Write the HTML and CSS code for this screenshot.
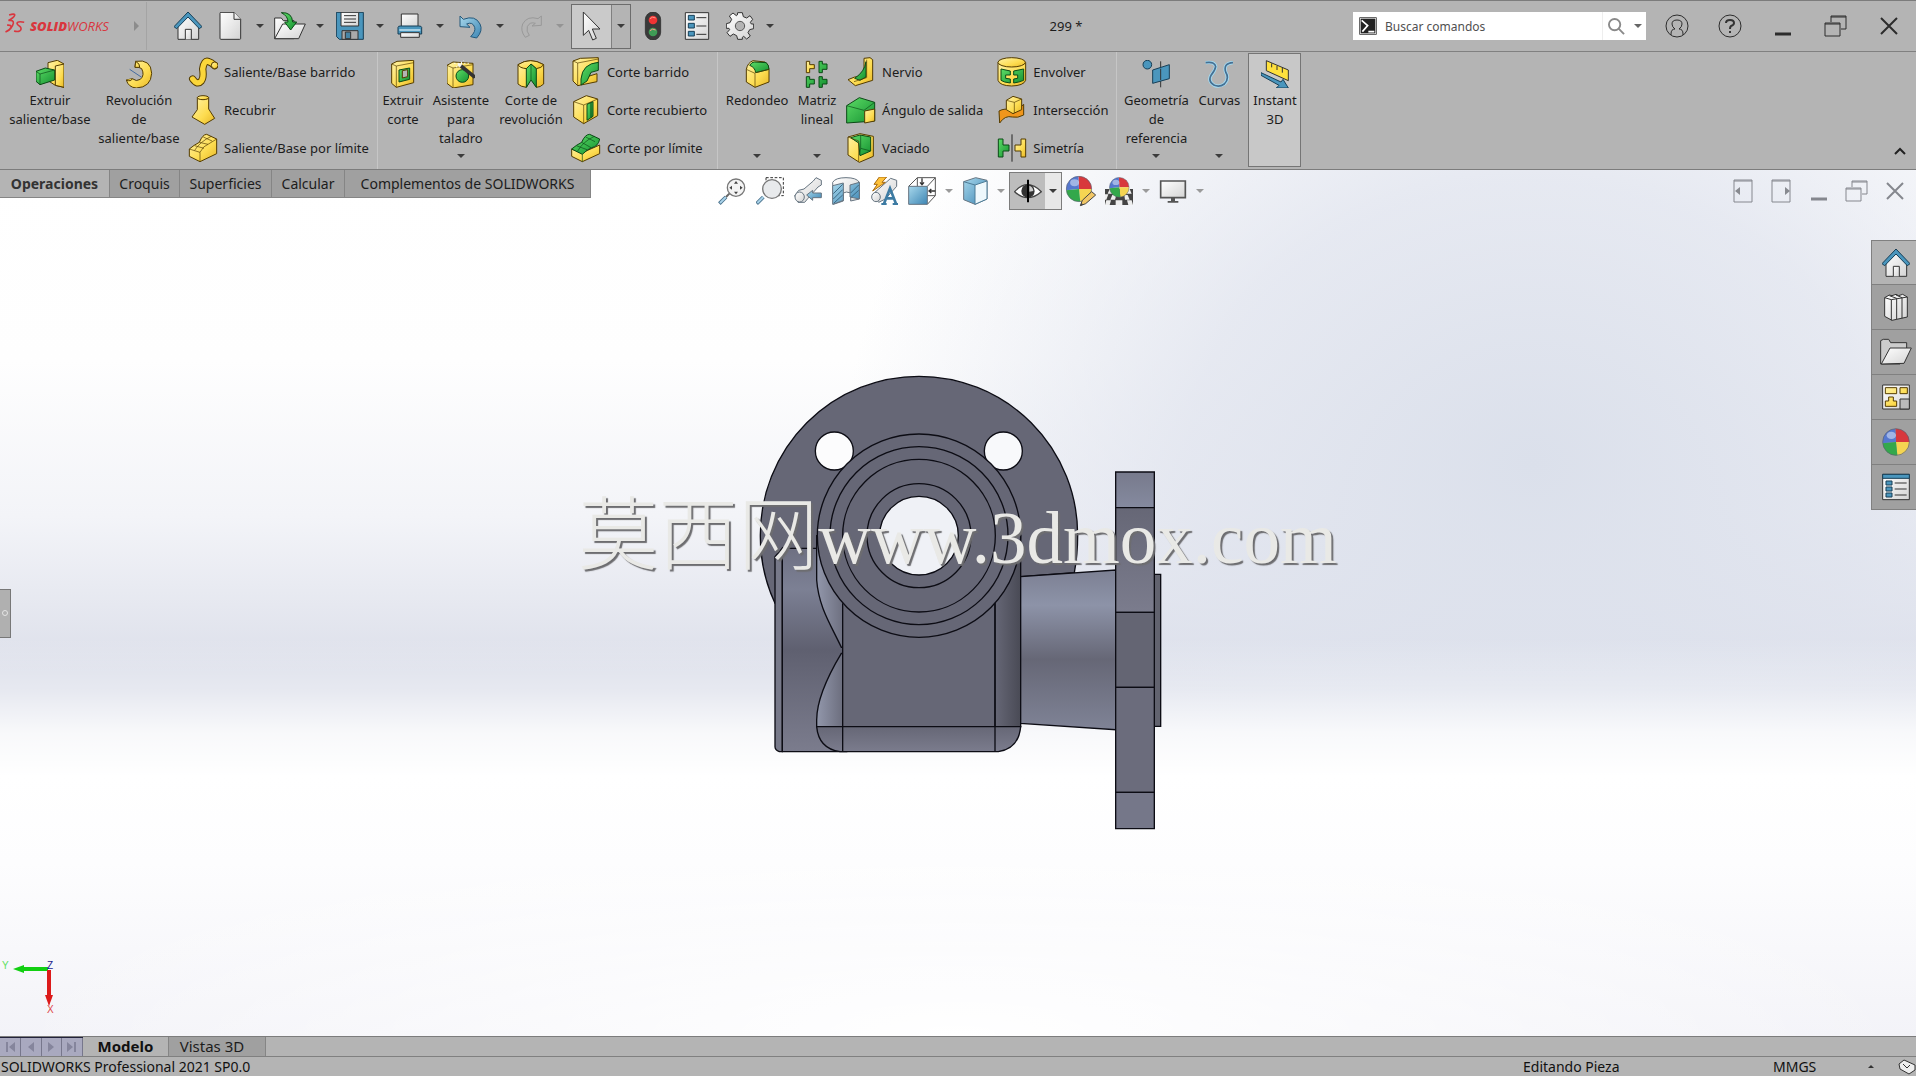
FILE: index.html
```html
<!DOCTYPE html>
<html lang="es">
<head>
<meta charset="utf-8">
<title>299 - SOLIDWORKS</title>
<link rel="stylesheet" href="styles.css">
</head>
<body>
<svg class="defs" aria-hidden="true">
  <defs>
    <linearGradient id="gy" x1="0" y1="0" x2="1" y2="1"><stop offset="0" stop-color="#fff3a8"/><stop offset=".6" stop-color="#fddc50"/><stop offset="1" stop-color="#e6b626"/></linearGradient>
    <linearGradient id="gg" x1="0" y1="0" x2="1" y2="1"><stop offset="0" stop-color="#5ddc66"/><stop offset="1" stop-color="#159232"/></linearGradient>
    <linearGradient id="gb" x1="0" y1="0" x2="1" y2="1"><stop offset="0" stop-color="#a8d8ec"/><stop offset="1" stop-color="#3d86b4"/></linearGradient>
    <linearGradient id="gw" x1="0" y1="0" x2="1" y2="1"><stop offset="0" stop-color="#ffffff"/><stop offset="1" stop-color="#d4d4d4"/></linearGradient>
    <symbol id="house" viewBox="0 0 84 84"><path class="w" d="M12 38V82H74V38L42 8Z"/><path class="w" d="M34 82V52H52V82"/><path class="bd" d="M0 44L42 0 84 44 76 50 42 15 8 50Z"/></symbol>
    <symbol id="ball" viewBox="0 0 84 84"><path fill="#d8383c" d="M42 42L40 2A40 40 0 0 1 82 42Z"/><path fill="#5578cf" d="M42 42L2 46A40 40 0 0 1 40 2Z"/><path fill="#f5d552" d="M42 42L82 42A40 40 0 0 1 46 82Z"/><path fill="#33a84b" d="M42 42L46 82A40 40 0 0 1 2 46Z"/><circle cx="42" cy="42" r="40" fill="none" stroke="#5a6070" stroke-width="2"/><ellipse cx="28" cy="22" rx="14" ry="11" fill="#fff" opacity=".45"/></symbol>
    <symbol id="restore" viewBox="0 0 24 24"><path class="thin" d="M7 8V2H22V15H17M1 9H16V22H1ZM1 10H16M7 3H22"/></symbol>
    <symbol id="close" viewBox="0 0 24 24"><path class="cross" d="M4 4L20 20M20 4L4 20"/></symbol>
    <symbol id="minus" viewBox="0 0 24 24"><path class="bar" d="M4 20H20"/></symbol>
  </defs>
</svg>

<header class="titlebar">
  <a class="brand" href="#" aria-label="SOLIDWORKS">
    <svg class="mark" viewBox="0 0 60 64"><path d="M12 6Q30 0 29 7 26 15 10 23 26 20 25 31 21 50 1 58M6 37Q20 36 18 44 14 53 1 58M58 28Q38 24 36 31 36 36 46 42 52 50 44 55 38 58 27 55"/></svg>
    <span class="word"><b>SOLID</b>WORKS</span>
    <span class="more"></span>
  </a>
  <nav class="quick" aria-label="Acceso rápido">
    <button class="q" aria-label="Inicio"><svg class="i28"><use href="#house"/></svg></button>
    <button class="q" aria-label="Nuevo"><svg class="i28" viewBox="0 0 84 84"><path class="w" d="M12 4Q12 1 15 1H54L74 22V79Q74 82 71 82H15Q12 82 12 79Z"/><path class="w" d="M54 1V22H74"/></svg></button>
    <button class="c" aria-label="Más opciones de Nuevo"><i class="caret"></i></button>
    <button class="q" aria-label="Abrir"><svg class="i32" viewBox="0 0 96 84"><path class="w" d="M2 80V18H22L28 26H60V80Z"/><path class="w" d="M2 80L26 36H94L74 80Z"/><path class="g" d="M22 2Q54 0 56 30H68L50 54 32 30H42Q42 12 22 2Z"/></svg></button>
    <button class="c" aria-label="Más opciones de Abrir"><i class="caret"></i></button>
    <button class="q" aria-label="Guardar"><svg class="i28" viewBox="0 0 84 84"><path class="bd" d="M1 1H82V82H10L1 73Z"/><path class="w" d="M15 1H68V42H15Z"/><path class="l" d="M24 11H60M24 21H60M24 31H60"/><path fill="#aaa" stroke="#333" stroke-width="3" d="M18 56H66V82H18Z"/><path fill="#4684a6" stroke="#333" stroke-width="3" d="M28 60H44V80H28Z"/></svg></button>
    <button class="c" aria-label="Más opciones de Guardar"><i class="caret"></i></button>
    <button class="q" aria-label="Imprimir"><svg class="i28" viewBox="0 0 84 84"><path class="w" d="M16 6H66V44H16Z"/><path class="bd" d="M6 46Q6 42 14 42H68Q77 42 77 46V66H6Z"/><path class="w" d="M14 62H70V76H14Z"/><path stroke="#d6eef8" stroke-width="4" d="M10 54H73"/></svg></button>
    <button class="c" aria-label="Más opciones de Imprimir"><i class="caret"></i></button>
    <button class="q" aria-label="Deshacer"><svg class="i28" viewBox="0 0 84 84"><path class="b" d="M12 12V44L42 46 32 36Q50 28 56 46 60 58 44 74L62 78Q82 56 72 36 58 8 22 22Z"/></svg></button>
    <button class="c" aria-label="Más opciones de Deshacer"><i class="caret"></i></button>
    <button class="q" aria-label="Rehacer" disabled><svg class="i28" viewBox="0 0 84 84"><path fill="none" stroke="#999" stroke-width="3" d="M76 12V40L48 42 58 34Q42 28 34 44 30 58 40 70L28 76Q12 56 20 36 34 10 66 20Z"/></svg></button>
    <button class="c dim" aria-label="Más opciones de Rehacer" disabled><i class="caret"></i></button>
    <span class="pick"><button class="sel" aria-label="Seleccionar"><svg class="i32" viewBox="0 0 96 96"><path class="w" d="M22 6V76L38 61 50 90 61 85 49 57H72Z"/></svg></button><button class="selc" aria-label="Más opciones de Seleccionar"><i class="caret"></i></button></span>
    <button class="q wide" aria-label="Reconstruir"><svg class="i28" viewBox="0 0 84 84"><rect x="19" y="0" width="46" height="84" rx="23" fill="#3a3a3a" stroke="#222" stroke-width="2"/><circle cx="42" cy="24" r="13" fill="#f03434"/><circle cx="42" cy="60" r="13" fill="#3f9b55"/><path stroke="#ff9a8a" stroke-width="3" d="M33 20Q40 12 50 18M33 56Q40 48 50 54" fill="none"/></svg></button>
    <button class="q wide" aria-label="Propiedades"><svg class="i28" viewBox="0 0 84 84"><path class="w" d="M7 2H77V82H7Z"/><path class="l" d="M40 17H70M40 42H70M40 67H70"/><path class="bd" d="M16 10H34V24H16ZM16 34H34V48H16ZM16 58H34V72H16Z"/></svg></button>
    <button class="q" aria-label="Opciones"><svg class="i28" viewBox="0 0 84 84"><path class="w" d="M35 2H49L52 14 62 18 72 11 80 22 73 31 76 36H83V50L71 53 66 62 73 72 62 81 53 73 49 76V82H35L32 71 22 66 12 73 3 62 11 53 9 49H1V35L12 32 17 22 10 12 21 3 31 11 34 9Z"/><circle cx="42" cy="42" r="14" fill="#b4b4b4" stroke="#555" stroke-width="3"/></svg></button>
    <button class="c" aria-label="Más opciones de configuración"><i class="caret"></i></button>
  </nav>
  <h1 class="doc">299 *</h1>
  <div class="search">
    <svg class="prompt" viewBox="0 0 54 54"><rect x="1" y="1" width="52" height="52" fill="#222"/><rect x="4" y="4" width="46" height="46" fill="none" stroke="#eee" stroke-width="2"/><path d="M8 10L26 26 10 44M28 44H46" fill="none" stroke="#fff" stroke-width="5"/></svg>
    <input type="text" placeholder="Buscar comandos" aria-label="Buscar comandos">
    <button class="lens" aria-label="Buscar"><svg viewBox="0 0 18 18"><circle cx="7" cy="7" r="6"/><path d="M11 11L17 17"/></svg></button>
    <button class="lensc" aria-label="Opciones de búsqueda"><i class="caret"></i></button>
  </div>
  <div class="window">
    <button aria-label="Iniciar sesión"><svg class="i24" viewBox="0 0 24 24"><path class="thin" d="M6 21V20Q6 15 10 15 7 13 7 10 7 6 12 6 17 6 17 10 17 13 14 15 18 15 18 20V21"/><circle class="thin" cx="12" cy="12" r="11"/></svg></button>
    <button aria-label="Ayuda"><svg class="i24" viewBox="0 0 24 24"><circle class="thin" cx="12" cy="12" r="11"/><path d="M8 9Q8 6 12 6 16 6 16 9 16 11 13 12 12 13 12 15M12 17V19" fill="none" stroke="#333" stroke-width="2"/></svg></button>
    <button aria-label="Minimizar"><svg class="i24"><use href="#minus"/></svg></button>
    <button aria-label="Restaurar"><svg class="i24"><use href="#restore"/></svg></button>
    <button aria-label="Cerrar"><svg class="i24"><use href="#close"/></svg></button>
  </div>
</header>

<section class="ribbon" aria-label="Operaciones">
  <div class="group">
    <button class="big w100"><svg class="i28" viewBox="0 0 84 84"><path class="y" d="M36 8L64 1 84 12V82L58 76 36 62Z"/><path class="y" d="M58 18L84 12V82L58 76Z"/><path class="g" d="M0 34L28 24 56 30V60L12 74 0 64Z"/><path class="gl" d="M0 34L12 42 56 30M12 42V74"/></svg><span>Extruir<br>saliente/base</span></button>
    <button class="big w78"><svg class="i28" viewBox="0 0 84 84"><path class="y" d="M32 4Q78-4 80 40 78 82 34 84 10 82 4 60L22 56Q34 66 46 58 60 46 50 26 42 20 30 22Z"/><path class="y" d="M32 4Q46 12 44 22 36 22 30 22ZM4 60Q18 66 22 56"/><path stroke="#456ca0" stroke-width="3" d="M14 28L50 52"/></svg><span>Revolución<br>de<br>saliente/base</span></button>
    <div class="stack s1">
      <button class="row"><svg class="i30" viewBox="0 0 90 90"><path fill="none" stroke="#543c00" stroke-width="22" stroke-linecap="round" d="M14 66Q28 86 40 72 48 62 44 36 48 8 62 14 70 16 80 26"/><path fill="none" stroke="#fbd63a" stroke-width="16" stroke-linecap="round" d="M14 66Q28 86 40 72 48 62 44 36 48 8 62 14 70 16 80 26"/><circle class="y" cx="80" cy="25" r="10"/></svg>Saliente/Base barrido</button>
      <button class="row"><svg class="i30" viewBox="0 0 90 90"><path class="y" d="M28 8V44L12 66 50 88 80 70 62 42V8Z"/><ellipse class="y" cx="45" cy="8" rx="17" ry="6"/></svg>Recubrir</button>
      <button class="row"><svg class="i30" viewBox="0 0 90 90"><path class="y" d="M4 48Q18 36 34 28 44 4 56 4L86 18V62L36 86 4 70Z"/><path class="yl" d="M4 48L36 58Q46 38 60 34L86 18M36 58V86M20 38L48 46M34 28L60 34M46 12L72 24M20 52Q36 26 70 10"/></svg>Saliente/Base por límite</button>
    </div>
  </div>
  <div class="group">
    <button class="big w50"><svg class="i28" viewBox="0 0 84 84"><path class="y" d="M8 12L24 4 74 1V68L22 82 8 70Z"/><path class="yl" d="M8 12L22 18 74 8M22 18V82"/><path class="g" d="M30 30L62 24V58L30 66Z"/><path fill="#b4b4b4" stroke="#543c00" stroke-width="3" d="M40 32L56 29V50L40 54Z"/></svg><span>Extruir<br>corte</span></button>
    <button class="big w66"><svg class="i28" viewBox="0 0 84 84"><path class="y" d="M0 16L18 6 78 10V74L18 84 0 70Z"/><path class="yl" d="M0 16L18 24V84M18 24L78 14"/><circle class="g" cx="46" cy="48" r="19"/><path stroke="#eee" stroke-width="10" d="M34 12L44 20"/><path stroke="#333" stroke-width="11" d="M42 18L84 52"/><path stroke="#fff" stroke-width="4" stroke-dasharray="3 7" d="M22 10H66M28 22L50 0"/></svg><span>Asistente<br>para<br>taladro</span><i class="caret"></i></button>
    <button class="big w74"><svg class="i28" viewBox="0 0 84 84"><path class="y" d="M3 14Q40-10 80 14V72Q70 82 58 82L42 56 28 82Q10 80 3 72Z"/><path class="y" d="M3 14Q40-10 80 14 74 24 58 26L42 12 28 26Q8 24 3 14Z"/><path class="g" d="M42 12L58 26V82L42 60 28 82V26Z"/><path class="gl" d="M42 12V60"/></svg><span>Corte de<br>revolución</span></button>
    <div class="stack s2">
      <button class="row"><svg class="i30" viewBox="0 0 90 90"><path class="y" d="M6 12L28 4 82 2V18Q60 30 52 58L78 50V74L20 86 6 72Z"/><path class="g" d="M30 66Q34 20 82 16V40L60 46 48 72 30 84Z"/><path class="yl" d="M6 12L20 18 82 6M20 18V86"/></svg>Corte barrido</button>
      <button class="row"><svg class="i30" viewBox="0 0 90 90"><path class="y" d="M8 20L46 2 80 12V62L38 86 8 66Z"/><path class="yl" d="M8 20L38 30 80 12M38 30V86"/><path class="g" d="M48 28L66 20V64L48 76Z"/><path class="g" d="M60 22V68"/></svg>Corte recubierto</button>
      <button class="row"><svg class="i30" viewBox="0 0 90 90"><path class="y" d="M2 48L32 60 86 36V62L34 86 2 70Z"/><path class="g" d="M2 48Q16 36 32 28 42 4 56 4L86 18Q82 40 62 44 50 48 34 64Z"/><path class="gl" d="M16 38L48 50M32 28L60 44M44 12L72 26M20 54Q36 26 70 10M34 64V86"/></svg>Corte por límite</button>
    </div>
  </div>
  <div class="group">
    <button class="big w78"><svg class="i28" viewBox="0 0 84 84"><path class="y" d="M10 28Q14 8 30 2L66 6Q78 12 78 30V66L36 82 10 66Z"/><path class="g" d="M20 16Q26 6 34 6L70 8Q78 16 78 28L38 38Q36 22 20 16Z"/><path class="yl" d="M10 28L36 40V82M38 38L78 28"/></svg><span>Redondeo</span><i class="caret"></i></button>
    <button class="big w42"><svg class="i28" viewBox="0 0 84 84"><path class="y" d="M10 4H20V14H34V26H20V38H10Z"/><path class="g" d="M48 4H58V12H72V28H58V38H48ZM10 50H20V58H34V72H20V82H10ZM48 50H58V58H72V72H58V82H48Z"/></svg><span>Matriz<br>lineal</span><i class="caret"></i></button>
    <div class="stack s3">
      <button class="row"><svg class="i30" viewBox="0 0 90 90"><path class="y" d="M54 4L72 2 80 8V70L28 86 6 68 26 60 54 56Z"/><path class="g" d="M60 14Q56 44 26 64L42 70 60 60Z"/><path class="yl" d="M62 8V62L24 74"/></svg>Nervio</button>
      <button class="row"><svg class="i30" viewBox="0 0 90 90"><path class="g" d="M2 32L40 8 86 22V78L2 84Z"/><path class="gl" d="M2 32L54 46 86 22"/><path class="y" d="M56 48L86 42V78L56 84Z"/></svg>Ángulo de salida</button>
      <button class="row"><svg class="i30" viewBox="0 0 90 90"><path class="y" d="M6 12L42 2 82 10V70L40 88 6 66Z"/><path class="g" d="M14 14L42 6 74 12V54L42 68 38 30Z"/><path class="yl" d="M6 12L38 24V86"/><path class="gl" d="M44 6V46L74 54M44 46L40 66"/></svg>Vaciado</button>
    </div>
    <div class="stack s4">
      <button class="row"><svg class="i30" viewBox="0 0 90 90"><path class="y" d="M3 16V70Q8 86 44 87 80 86 86 70V16Z"/><ellipse class="y" cx="44" cy="16" rx="41" ry="14"/><path class="g" d="M12 36L40 42V54H26V64L40 66V78Q20 76 12 70ZM50 42L80 36V70Q66 76 50 78V66L62 64V54H50Z"/></svg>Envolver</button>
      <button class="row"><svg class="i30" viewBox="0 0 90 90"><path fill="#f0961c" stroke="#543c00" stroke-width="3" d="M6 48Q24 38 42 46 58 50 80 28V60Q62 70 46 66 24 60 8 84Z"/><path class="y" d="M28 16L48 4 74 12V44L48 56 28 44Z"/><path class="yl" d="M28 16L52 22 74 12M52 22V54"/></svg>Intersección</button>
      <button class="row"><svg class="i30" viewBox="0 0 90 90"><path class="g" d="M4 18H18V36H36V54H18V72H4Z"/><path class="y" d="M86 18H72V36H54V54H72V72H86Z"/><path d="M45 4V86" stroke="#222" stroke-width="3"/></svg>Simetría</button>
    </div>
  </div>
  <div class="group last">
    <button class="big w78"><svg class="i28" viewBox="0 0 84 84"><path stroke="#333" stroke-width="3" d="M56 4V82"/><circle class="bd" cx="16" cy="14" r="13"/><path class="bd" d="M32 30L82 14V56L32 70Z"/><path stroke="#333" stroke-width="3" d="M56 26V60"/></svg><span>Geometría<br>de<br>referencia</span><i class="caret"></i></button>
    <button class="big w48"><svg class="i28" viewBox="0 0 84 84"><path fill="none" stroke="#a3dcf4" stroke-width="10" d="M2 8Q30 4 32 20 30 32 18 46 8 64 28 76 44 82 58 72 74 56 62 36 54 10 84 8"/><path fill="none" stroke="#456f92" stroke-width="5" d="M2 8Q30 4 32 20 30 32 18 46 8 64 28 76 44 82 58 72 74 56 62 36 54 10 84 8"/></svg><span>Curvas</span><i class="caret"></i></button>
    <button class="big on"><svg class="i28" viewBox="0 0 84 84"><path fill="#ffe13d" stroke="#333" stroke-width="3" d="M16 2L82 30V62L16 32Z"/><path stroke="#333" stroke-width="3" d="M32 10V22M48 18V30M64 24V38"/><path class="bd" d="M0 38L60 66 66 58 82 84H46L54 76 0 46Z"/></svg><span>Instant<br>3D</span></button>
  </div>
  <button class="fold" aria-label="Contraer"><svg viewBox="0 0 12 8"><path d="M1 7L6 2 11 7"/></svg></button>
</section>

<main class="viewport">
  <div class="head">
    <nav class="tabs" aria-label="Pestañas">
      <button class="tab active w110">Operaciones</button><button class="tab w70">Croquis</button><button class="tab w92">Superficies</button><button class="tab w73">Calcular</button><button class="tab w246">Complementos de SOLIDWORKS</button>
    </nav>
    <div class="hud">
      <button aria-label="Zoom para ajustar"><svg class="i28" viewBox="0 0 84 84"><path fill="none" stroke="#49718c" stroke-width="11" d="M4 80L24 60"/><path stroke="#a9d3ea" stroke-width="6" d="M6 78L24 60"/><path stroke="#666" stroke-width="6" d="M24 60L34 50"/><circle cx="54" cy="32" r="26" fill="#f4f4f4" stroke="#777" stroke-width="4"/><path fill="#444" d="M54 12L60 20H48ZM54 52L60 44H48ZM34 32L42 26V38ZM74 32L66 26V38Z"/></svg></button>
      <button aria-label="Zoom encuadre"><svg class="i28" viewBox="0 0 84 84"><path fill="none" stroke="#333" stroke-width="3" stroke-dasharray="8 5" d="M30 2H82V56H60M30 2V20"/><path stroke="#49718c" stroke-width="11" d="M2 80L22 60"/><path stroke="#a9d3ea" stroke-width="6" d="M4 78L22 60"/><circle cx="48" cy="36" r="28" fill="#e8eaec" stroke="#777" stroke-width="4"/></svg></button>
      <button aria-label="Vista previa"><svg class="i28" viewBox="0 0 84 84"><path class="w soft" d="M2 56L14 40 30 36 58 12 66 2 82 10V24L72 30 42 64 32 76 12 76Z"/><ellipse class="w soft" cx="17" cy="60" rx="14" ry="15"/><path class="b soft" d="M38 54L56 40V48H82V62H56V70Z"/></svg></button>
      <button aria-label="Vista de sección"><svg class="i28" viewBox="0 0 84 84"><path class="w soft" d="M2 16Q10 2 42 2 74 2 82 16V66L56 72V48Q42 42 34 48V72L4 82Z"/><path class="b soft" d="M2 26L34 18V70L2 82ZM54 24L82 16V66L54 60Z"/><path stroke="#3b6984" stroke-width="3" d="M4 50L32 22M4 66L32 38M6 78L32 54M56 48L80 24M58 60L80 40"/></svg></button>
      <button aria-label="Vistas de anotación"><svg class="i28" viewBox="0 0 84 84"><path class="w soft" d="M6 54L26 36 62 4 80 10V28L46 66 26 76Z"/><ellipse class="w soft" cx="18" cy="60" rx="13" ry="14"/><path fill="#ffc23a" stroke="#a86a10" stroke-width="3" d="M28 0H50L36 16H46L8 42 22 22H12Z"/><path fill="none" stroke="#3d7ba3" stroke-width="8" d="M42 80L60 34 78 80M48 64H72M34 82H50M68 82H86"/></svg></button>
      <button aria-label="Orientación de vista"><svg class="i28" viewBox="0 0 84 84"><path fill="#fff" stroke="#555" stroke-width="3" d="M2 28L28 2H82V56L58 82M28 2V28M58 56H82M58 28L82 2"/><path class="b soft" d="M2 28H58V82H2Z"/><path stroke="#333" stroke-width="4" fill="none" d="M42 4V22M36 16L42 23 48 16M82 42H64M70 36L63 42 70 48"/></svg></button>
      <button class="hc" aria-label="Más vistas"><i class="caret"></i></button>
      <button class="h36" aria-label="Estilo de visualización"><svg class="i28" viewBox="0 0 84 84"><path class="b soft" d="M8 14L44 2 78 10V66L42 82 8 68Z"/><path fill="#eef8fc" stroke="#4d7d98" stroke-width="3" d="M42 24L78 12V66L42 82Z"/><path fill="none" stroke="#4d7d98" stroke-width="3" d="M8 14L42 24"/></svg></button>
      <button class="hc" aria-label="Más estilos"><i class="caret"></i></button>
      <span class="eye"><button class="eyeb" aria-label="Ocultar o mostrar elementos"><svg class="i28" viewBox="0 0 84 84"><path fill="#fff" stroke="#444" stroke-width="4" d="M2 44Q40 2 82 44 40 80 2 44Z"/><circle cx="42" cy="42" r="20" fill="#333"/><path stroke="#000" stroke-width="6" d="M42 8V76"/><path fill="#ccc" d="M46 26A18 18 0 0 1 58 42L46 44Z"/></svg></button><button class="eyec" aria-label="Más elementos"><i class="caret"></i></button></span>
      <button aria-label="Editar apariencia"><svg class="i32" viewBox="0 0 96 96"><use href="#ball" x="2" y="2" width="80" height="80"/><path fill="#f2c766" stroke="#444" stroke-width="3" d="M80 50L92 60 62 86 46 92 52 76Z"/><path fill="#444" d="M46 92L49 83 55 89Z"/></svg></button>
      <button aria-label="Aplicar escena"><svg class="i28" viewBox="0 0 84 84"><path fill="#444" d="M0 36H84V84H0Z"/><path fill="#eee" d="M14 36H28L24 50H8ZM60 36H74L80 50H62ZM0 52H10L4 68H0ZM22 54H34L30 68H16ZM58 54H68L74 68H60ZM4 70H18L14 84H0ZM32 70H52V84H32ZM66 70H80L84 84H70Z"/><use href="#ball" x="12" y="0" width="62" height="62"/></svg></button>
      <button class="hc" aria-label="Más escenas"><i class="caret"></i></button>
      <button aria-label="Configuración de visualización"><svg class="i28" viewBox="0 0 84 84"><path fill="url(#gw)" stroke="#555" stroke-width="5" d="M5 12H79V62H5Z"/><path fill="#555" d="M36 62H48V72H58V77H26V72H36Z"/></svg></button>
      <button class="hc" aria-label="Más configuración"><i class="caret"></i></button>
    </div>
    <div class="docwin">
      <button aria-label="Panel izquierdo"><svg class="i24" viewBox="0 0 24 24"><path class="thin" d="M3 1H21V23H3ZM3 2H21"/><path fill="#888a90" d="M9 8V16L4 12Z"/></svg></button>
      <button aria-label="Panel derecho"><svg class="i24" viewBox="0 0 24 24"><path class="thin" d="M3 1H21V23H3ZM3 2H21"/><path fill="#888a90" d="M16 8V16L21 12Z"/></svg></button>
      <button aria-label="Minimizar documento"><svg class="i24"><use href="#minus"/></svg></button>
      <button aria-label="Restaurar documento"><svg class="i24"><use href="#restore"/></svg></button>
      <button aria-label="Cerrar documento"><svg class="i24"><use href="#close"/></svg></button>
    </div>
  </div>

  <div class="stage">
    <button class="handle" aria-label="Mostrar gestor"><i></i></button>
    <figure class="part">
      <svg class="solid" viewBox="0 0 1320 1440" role="img" aria-label="Pieza">
        <defs>
          <linearGradient id="boss" x1="0" y1="0" x2="0" y2="1"><stop offset="0" stop-color="#6e7082"/><stop offset=".2" stop-color="#7c8094"/><stop offset=".5" stop-color="#5f6070"/><stop offset="1" stop-color="#7b7c8d"/></linearGradient>
          <linearGradient id="cone" x1="0" y1="0" x2="0" y2="1"><stop offset="0" stop-color="#7c8093"/><stop offset=".22" stop-color="#8d93a8"/><stop offset=".56" stop-color="#666776"/><stop offset="1" stop-color="#7f8396"/></linearGradient>
          <linearGradient id="filr" x1="0" y1="0" x2="1" y2="0"><stop offset="0" stop-color="#666776"/><stop offset="1" stop-color="#494a55"/></linearGradient>
          <linearGradient id="fill" x1="0" y1="0" x2="1" y2="0"><stop offset="0" stop-color="#9297ab"/><stop offset="1" stop-color="#6c6e7e"/></linearGradient>
          <linearGradient id="foot" x1="0" y1="0" x2="0" y2="1"><stop offset="0" stop-color="#666776"/><stop offset="1" stop-color="#7b7c8d"/></linearGradient>
          <linearGradient id="shine" x1="0" y1="0" x2="0" y2="1"><stop offset="0" stop-color="#777a8c"/><stop offset="1" stop-color="#858a9f"/></linearGradient>
        </defs>
        <g stroke="#0c0c14" stroke-width="4">
          <path fill="#666776" d="M105 730A476 476 0 0 1 61 525A476 476 0 0 1 537 49A476 476 0 0 1 1013 525Q1013 584 1003 638L842 650V730Z"/>
          <circle cx="283" cy="273" r="57" fill="#fcfcfd"/><circle cx="790" cy="273" r="57" fill="#f8f9fb"/>
          <path fill="#777989" d="M105 590L127 565V1175H118Q105 1170 105 1160Z"/>
          <path fill="url(#boss)" d="M127 565H320V1175H127Z"/>
          <path fill="url(#fill)" d="M230 527V660C236 740 270 790 304 862H312V527Z"/>
          <path fill="url(#fill)" d="M304 880C250 970 230 1030 230 1080V1100H308V880Z"/>
          <path fill="#666776" stroke="none" d="M308 560H765V1100H308Z"/>
          <path fill="url(#filr)" d="M765 527H842V1100H765Z"/>
          <path fill="url(#foot)" d="M230 1100H842Q836 1166 775 1175H300Q236 1166 230 1100Z"/>
          <path fill="none" d="M308 730V1175M765 730V1175"/>
          <circle cx="537" cy="527" r="305" fill="#666776"/>
          <circle cx="537" cy="527" r="267" fill="none"/><circle cx="537" cy="527" r="229" fill="none"/><circle cx="537" cy="527" r="156" fill="none"/>
          <circle cx="537" cy="527" r="118" fill="#eff1f6"/>
          <path fill="url(#cone)" d="M842 650L1127 630V1109L842 1090Z"/>
          <path fill="#62636f" d="M1243 643H1262V1099H1243Z"/>
          <path fill="url(#shine)" d="M1127 336H1243V443H1127Z"/>
          <path fill="url(#foot)" d="M1127 443H1243V757H1127Z"/>
          <path fill="#646573" d="M1127 757H1243V982H1127Z"/>
          <path fill="#6b6c7c" d="M1127 982H1243V1297H1127Z"/>
          <path fill="#757789" d="M1127 1297H1243V1406H1127Z"/>
        </g>
      </svg>
      <figcaption class="mark-text"><span class="han">莫西网</span>www.3dmox.com</figcaption>
    </figure>
    <nav class="pane" aria-label="Panel de tareas">
      <button class="first" aria-label="Recursos"><svg class="i28"><use href="#house"/></svg></button>
      <button aria-label="Biblioteca de diseño"><svg class="i28" viewBox="0 0 84 84"><path class="w" d="M8 14L22 6 30 8 42 4 50 8 62 4 76 12V72L30 82 8 70Z"/><path class="l" d="M8 14L28 20 76 12M28 20V82M44 16V78M60 14V76M22 8L44 16M42 6L60 14"/></svg></button>
      <button aria-label="Explorador de archivos"><svg class="i32" viewBox="0 0 96 84"><path fill="#ccc" stroke="#333" stroke-width="3" d="M2 78V8L10 4H26L32 14H80V40L60 78Z"/><path class="w" d="M4 78L30 30H94L72 76Z"/></svg></button>
      <button aria-label="Paleta de visualización"><svg class="i28" viewBox="0 0 84 84"><path class="w" d="M2 6H82V78H2Z"/><path class="y" d="M10 14H44V32H10ZM54 14H76V32H54ZM20 42H34V54H44V70H10V54H20Z"/><path fill="#bbb" stroke="#333" stroke-width="3" d="M54 48H82V78H54Z"/></svg></button>
      <button aria-label="Apariencias"><svg class="i28"><use href="#ball"/></svg></button>
      <button aria-label="Propiedades personalizadas"><svg class="i28" viewBox="0 0 84 84"><path class="w" d="M2 4H82V80H2Z"/><path class="bd" d="M2 4H82V16H2ZM12 24H30V36H12ZM12 42H30V54H12ZM12 60H30V72H12Z"/><path class="l" d="M38 30H74M38 48H74M38 66H74"/></svg></button>
    </nav>
  </div>

  <svg class="triad" viewBox="0 0 60 56" aria-label="Ejes">
    <path d="M48 8H22" stroke="#12cf12" stroke-width="4"/><path fill="#12cf12" d="M13 8L24 4V12Z"/>
    <path d="M49 9V36" stroke="#dc1a1a" stroke-width="4"/><path fill="#dc1a1a" d="M49 45L45 34H53Z"/>
    <text x="2" y="8" fill="#5fe05f">Y</text><text x="47" y="8" fill="#1c1c8c">Z</text><text x="47" y="52" fill="#e04848">X</text>
  </svg>
</main>

<nav class="sheets" aria-label="Hojas">
  <span class="steps">
    <button aria-label="Primera"><svg viewBox="0 0 14 14"><path d="M3 2H5V12H3ZM12 2V12L6 7Z"/></svg></button><button aria-label="Anterior"><svg viewBox="0 0 14 14"><path d="M10 2V12L4 7Z"/></svg></button><button aria-label="Siguiente"><svg viewBox="0 0 14 14"><path d="M4 2V12L10 7Z"/></svg></button><button aria-label="Última"><svg viewBox="0 0 14 14"><path d="M9 2H11V12H9ZM2 2V12L8 7Z"/></svg></button>
  </span>
  <button class="sheet current">Modelo</button><button class="sheet">Vistas 3D</button>
</nav>
<footer class="status">
  <span class="product">SOLIDWORKS Professional 2021 SP0.0</span>
  <span class="mode">Editando Pieza</span>
  <span class="units">MMGS</span>
  <button class="up" aria-label="Cambiar unidades"><i></i></button>
  <button class="tag" aria-label="Etiquetas"><svg viewBox="0 0 18 16"><path d="M1 5L6 1 17 6V11L11 15 2 10Z" fill="#eee" stroke="#333"/><path d="M5 5L9 9 12 6" fill="none" stroke="#333"/></svg></button>
</footer>
</body>
</html>
```
FILE: styles.css
```css
* { box-sizing: border-box; }
body {
  margin: 0;
  height: 100vh;
  display: flex;
  flex-direction: column;
  overflow: hidden;
  background: #b4b4b4;
  color: #1c1c1c;
  font: 13px/19px "Noto Sans", "Open Sans", sans-serif;
}
button {
  margin: 0;
  padding: 0;
  border: 0;
  background: none;
  color: inherit;
  font: inherit;
  display: flex;
  align-items: center;
  justify-content: center;
}
svg { display: block; flex: none; }
.defs { position: absolute; width: 0; height: 0; }

/* icon sizes and paints */
.i24 { width: 24px; height: 24px; }
.i28 { width: 28px; height: 28px; }
.i30 { width: 30px; height: 30px; }
.i32 { width: 32px; height: 32px; }
.y { fill: url(#gy); stroke: #543c00; stroke-width: 3; stroke-linejoin: round; }
.yl { fill: none; stroke: #543c00; stroke-width: 2; }
.g { fill: url(#gg); stroke: #0b4a16; stroke-width: 3; stroke-linejoin: round; }
.gl { fill: none; stroke: #0b4a16; stroke-width: 2; }
.b { fill: url(#gb); stroke: #24587a; stroke-width: 3; stroke-linejoin: round; }
.bd { fill: #4a96bd; stroke: #173f57; stroke-width: 3; stroke-linejoin: round; }
.w { fill: url(#gw); stroke: #333; stroke-width: 3; stroke-linejoin: round; }
.soft { stroke: #667480; }
.l { fill: none; stroke: #333; stroke-width: 3; }
.thin { fill: none; stroke: currentColor; stroke-width: 1; }
.cross { fill: none; stroke: currentColor; stroke-width: 2; }
.bar { stroke: currentColor; stroke-width: 3; }
.caret {
  border: 4px solid transparent;
  border-top-color: #3c3c3c;
  border-bottom-width: 0;
}

/* title bar */
.titlebar {
  display: flex;
  align-items: center;
  flex: none;
  height: 52px;
  border-top: 1px solid #7c7c7c;
  border-bottom: 1px solid #808080;
}
.brand {
  display: flex;
  align-items: center;
  width: 147px;
  height: 48px;
  padding-left: 5px;
  gap: 5px;
  border-right: 1px solid #a4a4a4;
  color: #d9363e;
  text-decoration: none;
}
.mark { width: 20px; height: 21px; margin-bottom: 6px; }
.mark path { fill: none; stroke: #d9363e; stroke-width: 5; }
.word { font: italic 13px/19px "Open Sans", sans-serif; width: 99px; }
.word b { font-weight: 800; }
.more { border: 5px solid transparent; border-left-color: #8c8c8c; border-right-width: 0; }
.quick { display: flex; align-items: center; height: 50px; margin-left: 20px; }
.q { width: 42px; height: 44px; }
.wide { width: 44px; }
.c { width: 18px; height: 44px; }
.dim .caret { border-top-color: #949494; }
.pick { display: flex; margin-left: 2px; border: 1px solid #6c6c6c; height: 45px; }
.sel { width: 39px; background: #cacaca; }
.selc { width: 19px; border-left: 1px solid #808080; }
.doc { flex: 1; margin: 0; text-align: center; font-size: 13px; font-weight: 400; }
.search {
  display: flex;
  align-items: center;
  width: 293px;
  height: 28px;
  padding-left: 6px;
  background: #fff;
}
.prompt { width: 18px; height: 18px; }
.search input {
  flex: 1;
  min-width: 0;
  border: 0;
  padding: 1px 8px 0;
  font: 12px/19px "Noto Sans", sans-serif;
  color: #444;
  background: none;
}
.search input::placeholder { color: #505050; opacity: 1; }
.lens { width: 28px; height: 28px; border-left: 1px solid #eee; }
.lens svg { width: 17px; height: 17px; fill: none; stroke: #8a8a8a; stroke-width: 2; }
.lensc { width: 16px; }
.lensc .caret { border-top-color: #666; }
.window { display: flex; margin: 0 1px 0 4px; color: #2c2c2c; }
.window button { width: 53px; height: 44px; }

/* ribbon */
.ribbon { display: flex; flex: none; height: 118px; border-bottom: 1px solid #7c7c7c; }
.group { display: flex; height: 117px; border-right: 1px solid #c6c6c6; }
.last { border-right: 0; }
.big {
  flex-direction: column;
  justify-content: flex-start;
  padding: 8px 0 11px;
  white-space: nowrap;
}
.big span { margin-top: 3px; }
.big .caret { margin-top: auto; }
.w42 { width: 42px; }
.w48 { width: 48px; }
.w50 { width: 50px; }
.w66 { width: 66px; }
.w74 { width: 74px; }
.w78 { width: 78px; }
.w100 { width: 100px; }
.on { width: 53px; height: 114px; margin: 1px 0 0 5px; padding-top: 6px; border: 1px solid #757575; background: #c8c8c8; }
.stack { display: flex; flex-direction: column; padding-top: 1px; }
.s1 { padding-left: 10px; padding-right: 8px; }
.s2 { padding-left: 3px; padding-right: 10px; }
.s3 { padding-left: 8px; padding-right: 12px; }
.s4 { padding-left: 2px; padding-right: 8px; }
.row { height: 38px; gap: 6px; justify-content: flex-start; white-space: nowrap; }
.fold { align-self: flex-end; margin: 0 10px 14px auto; }
.fold svg { width: 12px; height: 8px; fill: none; stroke: #222; stroke-width: 2; }

/* graphics area */
.viewport {
  flex: 1;
  min-height: 0;
  display: flex;
  flex-direction: column;
  position: relative;
  background:
    radial-gradient(ellipse 50% 26% at 50% 100%, #ffffff 0%, rgba(255, 255, 255, 0) 100%),
    linear-gradient(180deg, rgba(255, 255, 255, 0) 54%, rgba(255, 255, 255, .3) 60%, rgba(255, 255, 255, .8) 65%, #ffffff 70%, #fdfdfe 80%, #f3f3f8 100%),
    radial-gradient(ellipse 36% 66% at 80% 34%, #dbe0eb 0%, rgba(222, 226, 237, .75) 50%, rgba(232, 235, 243, 0) 100%),
    linear-gradient(180deg, #ffffff 0%, #fefefe 22%, #f3f4f8 40%, #dcdfea 58%, #dcdfea 100%);
}
.head { display: grid; grid-template-columns: 1fr auto 1fr; height: 40px; flex: none; }
.tabs { display: flex; align-items: flex-start; }
.tab {
  height: 28px;
  flex: none;
  background: #a0a0a0;
  border-right: 1px solid #858585;
  border-bottom: 1px solid #858585;
  font-size: 14px;
  white-space: nowrap;
}
.active { background: #b4b4b4; font-weight: 700; color: #333; }
.w110 { width: 110px; }
.w70 { width: 70px; }
.w92 { width: 92px; }
.w73 { width: 73px; }
.w246 { width: 246px; }
.hud { display: flex; align-items: center; height: 40px; padding: 2px 0 0 5px; }
.hud button { width: 38px; height: 38px; }
.hud .h36 { width: 36px; }
.hud .hc { width: 16px; }
.hc .caret { border-top-color: #9a9a9a; }
.eye { display: flex; border: 1px solid #7c7c7c; }
.hud .eyeb { width: 35px; height: 36px; background: #bdbdbd; }
.hud .eyec { width: 16px; height: 36px; background: #e8e8e8; }
.docwin { display: flex; justify-content: flex-end; align-items: center; padding: 2px 2px 0 0; color: #85878e; }
.docwin button { width: 38px; height: 38px; }
.stage { flex: 1; min-height: 0; display: flex; align-items: center; justify-content: space-between; }
.handle { width: 11px; height: 49px; margin: 0 37px 20px 0; background: #b0b0b0; border: 1px solid #777; border-left: 0; }
.handle i { width: 6px; height: 6px; border: 1px solid #e4e4e4; border-radius: 3px; }
.part { position: relative; margin: 0 0 46px; }
.solid { width: 440px; height: 480px; }
.mark-text {
  position: absolute;
  left: 50%;
  top: 173px;
  transform: translate(-50%, -50%);
  padding-right: 4px;
  white-space: nowrap;
  font: 73px/80px "Liberation Serif", serif;
  color: #e9e9e6;
  text-shadow: 2px 2px 1px #6d6d70;
}
.han { font: 300 80px/80px "Noto Sans CJK SC", sans-serif; }
.pane { align-self: flex-start; margin-top: 30px; width: 45px; border-left: 1px solid #808080; }
.pane button { width: 44px; height: 45px; padding-left: 4px; background: #a0a0a0; border-bottom: 1px solid #808080; }
.pane .first { background: #b4b4b4; border-top: 1px solid #808080; }
.triad { position: absolute; left: 0; bottom: 19px; width: 60px; height: 56px; }
.triad text { font: 10px "Liberation Sans", sans-serif; }

/* sheet tabs and status bar */
.sheets { display: flex; flex: none; height: 20px; border-top: 1px solid #7c7c7c; }
.steps { display: flex; width: 83px; border-top: 1px solid #22223a; background: #a9a9bf; }
.steps button { flex: 1; border-right: 1px solid #77778c; }
.steps svg { width: 14px; height: 14px; fill: #85859c; }
.sheet { width: 97px; padding-right: 10px; background: #a0a0a0; border-right: 1px solid #858585; font-size: 15px; }
.sheet.current { width: 86px; padding: 0; background: #b4b4b4; font-weight: 700; color: #111; }
.status {
  display: flex;
  flex: none;
  height: 20px;
  padding-left: 1px;
  border-top: 1px solid #808080;
  font-size: 14px;
  color: #111;
}
.product { flex: 1; }
.mode { width: 250px; }
.units { width: 91px; }
.up { width: 14px; height: 19px; margin-right: 20px; }
.up i { border: 3px solid transparent; border-bottom-color: #333; border-top-width: 0; }
.tag { height: 19px; }
.tag svg { width: 18px; height: 16px; }
```
